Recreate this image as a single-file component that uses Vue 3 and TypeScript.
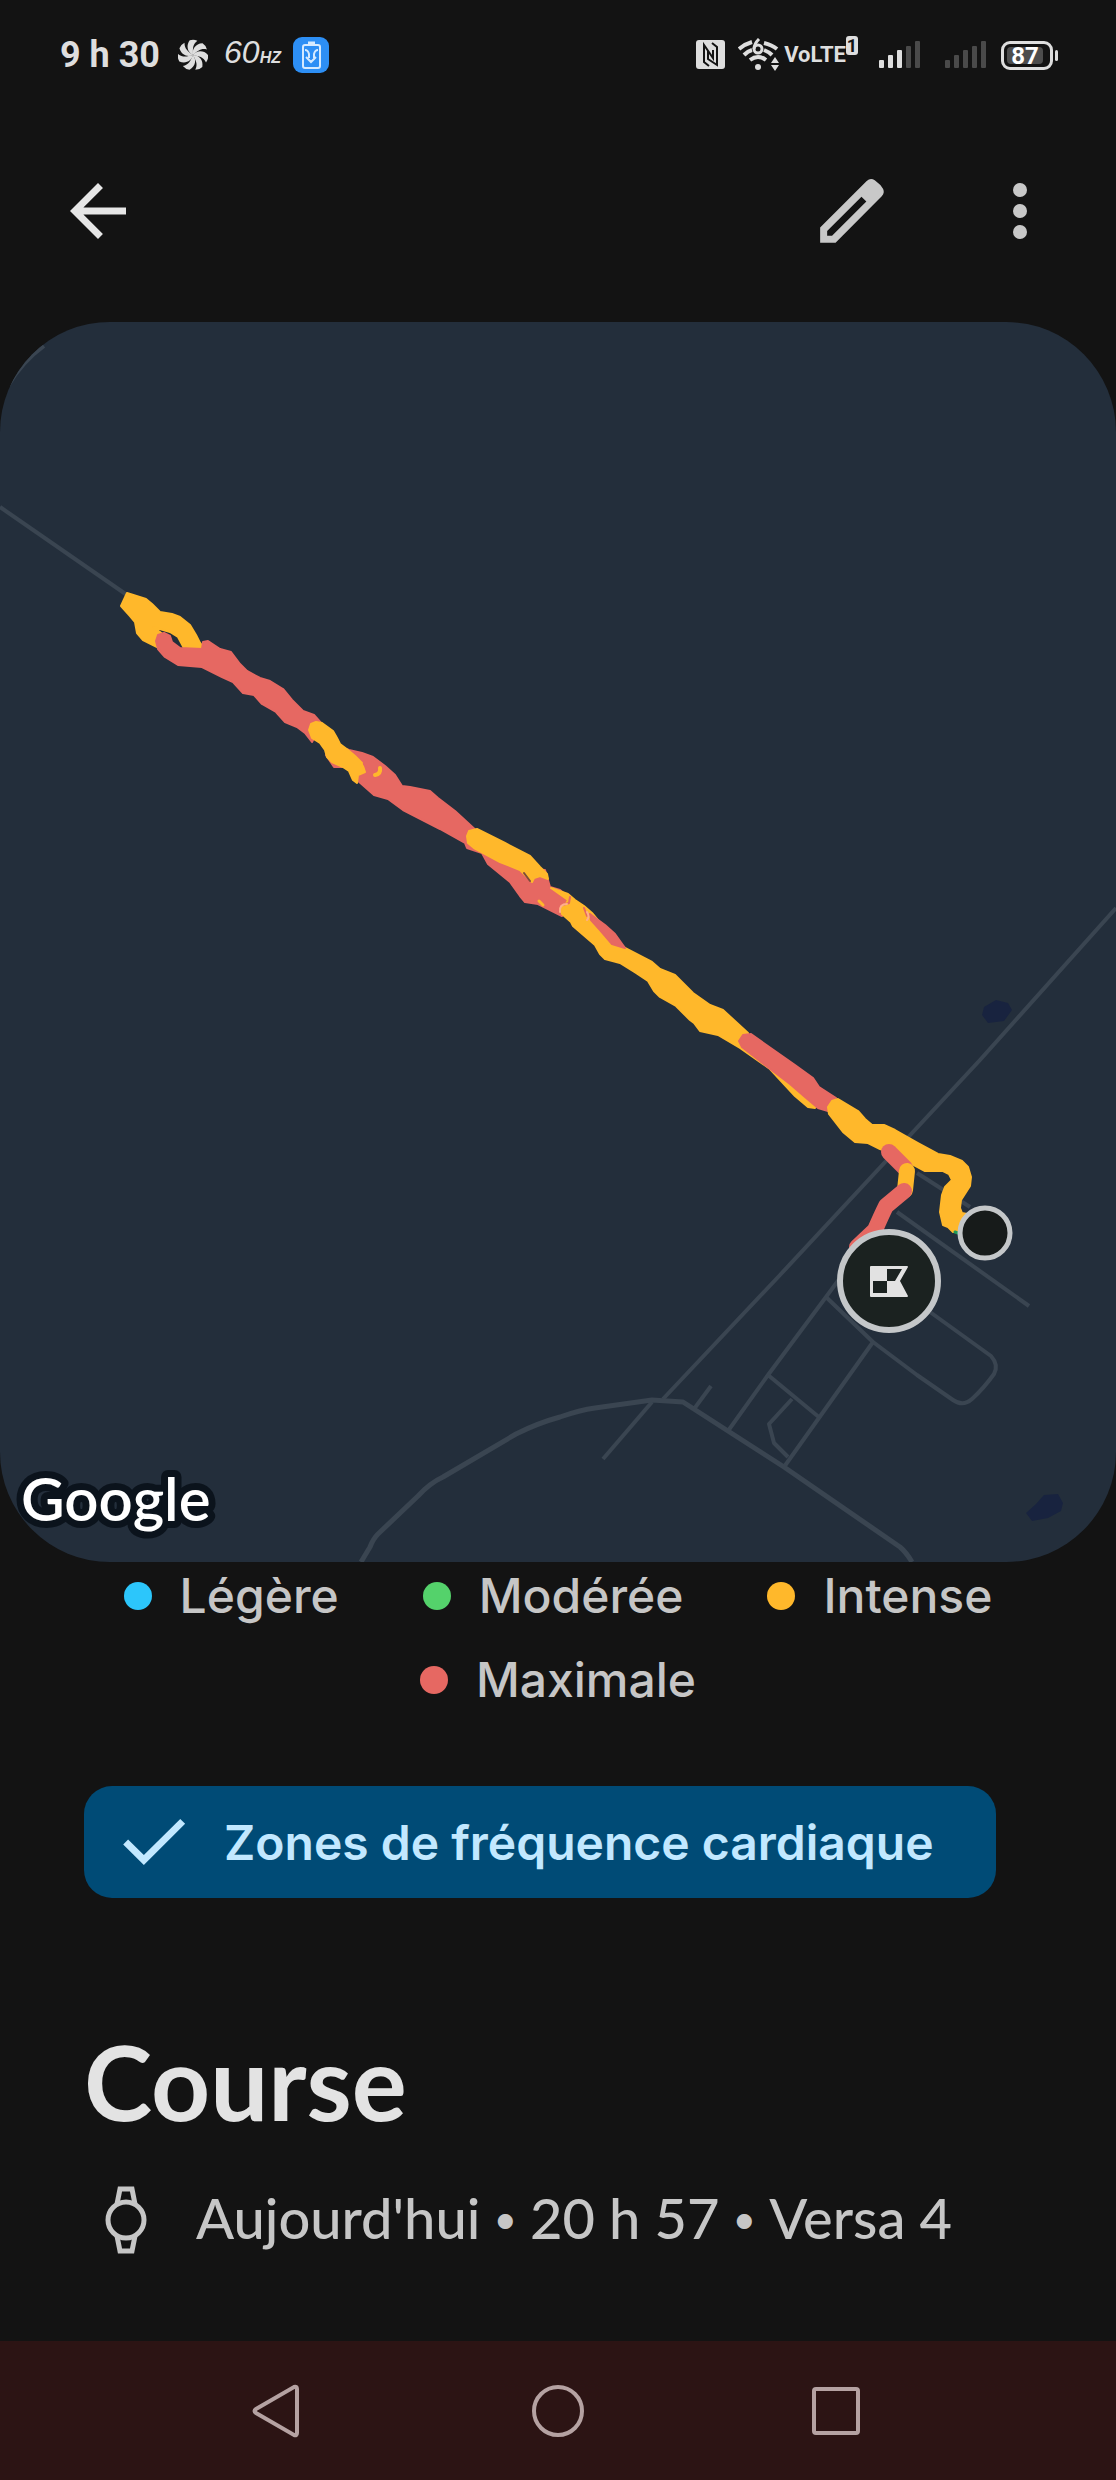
<script setup lang="ts">
interface Zone {
  label: string
  color: string
}

interface Shape {
  color: string
  points: string
}

const amber = '#ffb82b'
const coral = '#e66862'

const zones: Zone[] = [
  { label: 'Légère', color: '#2cc6fb' },
  { label: 'Modérée', color: '#54d26b' },
  { label: 'Intense', color: amber },
  { label: 'Maximale', color: coral },
]

const roads: string[] = [
  'M0 507 L127 595',
  'M8 386 Q22 362 44 346',
  'M1116 908 L980 1060 L780 1275 L663 1399',
  'M652 1402 L603 1459',
  'M694 1409 L711 1386',
  'M728 1431 L768 1375 L826 1297 L840 1278',
  'M826 1297 L873 1342 L917 1375 L953 1400 Q963 1407 972 1399 Q984 1388 994 1374 Q999 1365 991 1356 L930 1312',
  'M873 1342 L784 1467',
  'M768 1375 L820 1418',
  'M792 1399 L769 1424 L774 1443 L788 1457',
  'M897 1212 L1029 1306',
  'M917 1173 L970 1207',
]

const mainRoad =
  'M361 1562 L370 1547 Q373 1539 378 1534 L418 1496 Q430 1483 443 1477 L516 1434 Q538 1423 560 1417 Q580 1410 595 1408 L652 1400 L683 1402 L728 1431 L784 1467 L900 1547 Q906 1552 912 1562'

const track: Shape[] = [
  {
    color: amber,
    points:
      '127,593 146,599 152,604 160,612 172,614 180,617 190,625 196,635 200,643 205,649 202,652 185,650 178,637 170,632 153,627 160,632 165,636 165,646 157,647 143,640 137,633 135,622 130,616 121,606',
  },
  {
    color: coral,
    points:
      '156,641 158,635 164,633 170,636 172,642 180,648 202,649 203,642 208,641 220,649 231,652 240,664 247,671 260,678 270,681 283,689 292,700 303,711 314,715 322,724 312,742 305,733 297,727 285,722 276,712 262,704 254,695 243,693 233,682 222,677 202,667 178,665 165,657 158,649',
  },
  {
    color: coral,
    points:
      '326,755 334,767 342,767 346,766 357,780 374,795 388,799 403,810 440,829 465,843 467,848 482,853 488,864 510,882 520,896 525,902 538,904 546,908 562,916 572,900 560,890 550,887 545,870 520,868 500,858 486,848 480,834 455,811 438,798 430,791 410,787 402,786 395,775 385,766 373,757 362,753 349,750 335,745',
  },
  {
    color: amber,
    points:
      '309,730 311,724 316,722 322,723 333,731 337,738 340,744 348,750 355,756 362,763 365,772 358,775 357,783 353,780 349,771 343,767 332,762 327,757 325,750 320,743 312,738',
  },
  {
    color: amber,
    points:
      '467,836 469,831 477,829 485,833 505,843 530,856 540,867 547,874 548,879 540,876 534,878 532,882 520,870 500,862 474,848 468,843',
  },
  {
    color: amber,
    points:
      '551,888 568,894 575,900 584,906 592,913 606,930 625,948 652,962 660,969 675,975 693,993 710,1005 723,1010 748,1033 750,1050 770,1065 800,1085 818,1104 815,1108 808,1107 795,1096 770,1069 740,1048 718,1035 700,1031 694,1023 690,1020 676,1006 660,997 654,991 648,981 636,973 620,963 605,959 600,954 595,945 573,926 571,922 562,914 561,907 566,904 568,900',
  },
  { color: coral, points: '590,914 605,925 615,934 625,948 612,944 600,930 591,920' },
  {
    color: coral,
    points:
      '739,1041 743,1035 751,1034 765,1044 795,1065 813,1078 819,1087 836,1098 828,1111 818,1108 805,1097 790,1084 765,1065 742,1047',
  },
  {
    color: amber,
    points:
      '828,1107 832,1101 838,1099 858,1111 865,1119 872,1125 884,1125 895,1130 918,1143 938,1154 950,1156 962,1161 968,1167 971,1177 970,1186 961,1200 960,1208 962,1213 967,1214 965,1231 953,1232 948,1227 943,1225 940,1212 942,1195 945,1187 952,1180 949,1174 943,1171 925,1171 912,1164 900,1156 880,1149 868,1143 855,1142 843,1132 829,1114',
  },
]

const bars: number[] = [8, 13, 18, 22, 27]
</script>

<template>
  <div class="screen">
    <div class="status">
      <span class="clock">9 h 30</span>
      <svg class="fan" width="30" height="32" viewBox="-15 -16 30 32" aria-hidden="true">
        <path
          v-for="n in 7"
          :key="n"
          :transform="`rotate(${n * 51.43 - 20})`"
          d="M0 0 C-4 -4 -4 -11 2 -15 Q6 -15 9 -12 C3 -10 2 -6 0 0Z"
          fill="#dedede"
        />
      </svg>
      <span class="rate">60<b>HZ</b></span>
      <svg class="saver" width="36" height="36" viewBox="0 0 36 36" aria-hidden="true">
        <rect width="36" height="36" rx="9" fill="#2d8ff5" />
        <rect x="10" y="8" width="17" height="23" rx="2" fill="none" stroke="#d5eaff" stroke-width="2" />
        <path d="M15 6h7" stroke="#d5eaff" stroke-width="3" />
        <path
          d="M12 13q3 0 4 4v4M25 13q-3 0-4 4v4M13 20l5 5 5-5"
          fill="none"
          stroke="#d5eaff"
          stroke-width="2"
        />
      </svg>
      <span class="grow"></span>
      <svg class="nfc" width="30" height="30" viewBox="0 0 30 30" aria-hidden="true">
        <rect width="29" height="29" rx="3" fill="#dedede" />
        <path
          d="M13 26 L8 22 V5 L17 18 V10 M12 11 V19 L21 25 V7 L16 3"
          fill="none"
          stroke="#131313"
          stroke-width="2"
        />
      </svg>
      <svg class="wifi" width="42" height="34" viewBox="0 0 42 34" aria-hidden="true">
        <g fill="none" stroke="#dedede" stroke-width="4">
          <path d="M1 11 Q7 6 14 4 M26 5 Q34 7 39 11" />
          <path d="M6 17 Q10 13 14 12 M26 12 Q31 14 34 17" />
          <path d="M12 22 Q20 16 28 22" />
          <path d="M21 1 Q16 6 16 11" stroke-width="3" />
          <circle cx="20" cy="11" r="4" stroke-width="3" />
        </g>
        <circle cx="20" cy="29" r="3" fill="#dedede" />
        <path d="M33 25 l4-6 4 6z M33 27 l4 6 4-6z" fill="#dedede" />
      </svg>
      <span class="volte">VoLTE</span>
      <span class="sim">1</span>
      <svg class="signal" width="42" height="28" viewBox="0 0 42 28" aria-hidden="true">
        <rect
          v-for="(h, i) in bars"
          :key="i"
          :x="i * 9"
          :y="27 - h"
          width="5"
          :height="h"
          rx="1"
          :fill="i < 3 ? '#dedede' : '#4a4a4a'"
        />
      </svg>
      <svg class="signal second" width="42" height="28" viewBox="0 0 42 28" aria-hidden="true">
        <rect
          v-for="(h, i) in bars"
          :key="i"
          :x="i * 9"
          :y="27 - h"
          width="5"
          :height="h"
          rx="1"
          fill="#4a4a4a"
        />
      </svg>
      <span class="battery"><span class="level">87</span></span>
    </div>

    <header class="toolbar">
      <button type="button" aria-label="Retour">
        <svg viewBox="0 0 24 24" aria-hidden="true">
          <path
            fill="#e6e6e6"
            d="M20 11H7.83l5.59-5.59L12 4l-8 8 8 8 1.41-1.41L7.83 13H20v-2z"
          />
        </svg>
      </button>
      <span class="grow"></span>
      <button type="button" aria-label="Modifier">
        <svg viewBox="0 0 24 24" aria-hidden="true">
          <path
            fill="#c8c8c8"
            fill-rule="evenodd"
            d="M2.9 21.1V16.7L16.2 3.4Q17.3 2.4 18.5 3.2Q20.2 4.4 20.9 5.7Q21.4 6.8 20.5 7.8L7.3 21.1ZM4.9 19.1H6.3L16.1 9.3L14.7 7.9L4.9 17.7Z"
          />
        </svg>
      </button>
      <button type="button" aria-label="Plus d'options">
        <svg viewBox="0 0 24 24" aria-hidden="true">
          <g fill="#c8c8c8">
            <circle cx="12" cy="6" r="2" />
            <circle cx="12" cy="12" r="2" />
            <circle cx="12" cy="18" r="2" />
          </g>
        </svg>
      </button>
    </header>

    <main>
      <svg class="map" viewBox="0 322 1116 1240" role="img" aria-label="Carte du parcours">
        <rect y="322" width="1116" height="1240" fill="#232e3b" />
        <g fill="#18233f">
          <path d="M984 1007 L996 1000 L1008 1003 L1012 1010 L1004 1021 L988 1023 L982 1015Z" />
          <path
            d="M1026 1513 L1036 1504 L1044 1495 L1058 1494 L1063 1503 L1061 1511 L1048 1518 L1032 1521Z"
          />
        </g>
        <g fill="none" stroke="#3a4551" stroke-linejoin="round">
          <path v-for="d in roads" :key="d" :d="d" stroke-width="4" />
          <path :d="mainRoad" stroke-width="5" />
        </g>
        <polygon
          v-for="(s, i) in track"
          :key="i"
          :points="s.points"
          :fill="s.color"
          :stroke="s.color"
          stroke-width="2"
          stroke-linejoin="round"
        />
        <g fill="none" stroke-linecap="round" stroke-linejoin="round">
          <path d="M380 768 Q381 774 375 775" :stroke="amber" stroke-width="4" />
          <path d="M367 763 L373 766" :stroke="coral" stroke-width="8" />
          <path d="M539 901 L543 905" :stroke="amber" stroke-width="3" />
          <path d="M524 873 L530 881" stroke="#7c4a3c" stroke-width="2" />
          <path d="M570 897 L569 903 L563 905 M584 908 L587 916" :stroke="coral" stroke-width="2" />
          <path d="M560 912 Q559 904 567 904 M587 912 Q590 917 587 920" stroke="#ffb08a" stroke-width="2" />
          <path d="M955 1232 L958 1233" stroke="#1f9a58" stroke-width="3" />
          <g stroke-width="16">
            <path d="M889 1152 L905 1168" :stroke="coral" />
            <path d="M907 1171 L905 1190" :stroke="amber" />
            <path d="M904 1191 L886 1206 Q882 1214 875 1230 L857 1247" :stroke="coral" />
          </g>
        </g>
        <circle cx="985" cy="1233" r="25" fill="#171b1a" stroke="#c4c7c9" stroke-width="5" />
        <circle cx="889" cy="1281" r="49" fill="#1b2220" stroke="#c4c7c9" stroke-width="6" />
        <path
          fill="#e2e2e2"
          fill-rule="evenodd"
          d="M871 1266 H907 Q908 1266 908 1267 L900 1281 L908 1296 Q908 1297 907 1297 H871 Q870 1297 870 1296 V1267 Q870 1266 871 1266Z M887 1269 V1281 H895 L902 1269Z M873 1281 V1293 H887 V1281Z"
        />
        <text x="21" y="1521" class="brand">Google</text>
      </svg>

      <ul class="legend">
        <li v-for="z in zones" :key="z.label">
          <span class="dot" :style="{ background: z.color }"></span>{{ z.label }}
        </li>
      </ul>

      <button type="button" class="chip" aria-pressed="true">
        <svg width="84" height="84" viewBox="0 0 24 24" aria-hidden="true">
          <path
            fill="#c2e8ff"
            d="M9.1 18.6 L3.2 12.7 L4.6 11.3 L9.1 15.7 L19.5 5.4 L20.9 6.8Z"
          />
        </svg>
        <span>Zones de fréquence cardiaque</span>
      </button>

      <section class="details">
        <h1>Course</h1>
        <p>
          <svg width="44" height="70" viewBox="0 0 44 70" aria-hidden="true">
            <g fill="none" stroke="#c6c6c6" stroke-width="5">
              <circle cx="22" cy="35" r="18" />
              <path d="M13 19 L16 4 H28 L31 19 M13 51 L16 66 H28 L31 51" />
            </g>
          </svg>
          <span class="summary">
            <span>Aujourd'hui</span>
            <span class="bullet">•</span>
            <span>20 h 57</span>
            <span class="bullet">•</span>
            <span>Versa 4</span>
          </span>
        </p>
      </section>
    </main>

    <nav class="system">
      <button type="button" aria-label="Précédent">
        <svg width="60" height="60" viewBox="0 0 60 60" aria-hidden="true">
          <path d="M6 28 L44 6 Q47 5 47 8 V52 Q47 55 44 54 L6 32 Q3 30 6 28Z" />
        </svg>
      </button>
      <button type="button" aria-label="Accueil">
        <svg width="60" height="60" viewBox="0 0 60 60" aria-hidden="true">
          <circle cx="30" cy="30" r="24" />
        </svg>
      </button>
      <button type="button" aria-label="Applications récentes">
        <svg width="60" height="60" viewBox="0 0 60 60" aria-hidden="true">
          <rect x="8" y="8" width="44" height="44" rx="2" />
        </svg>
      </button>
    </nav>
  </div>
</template>

<style>
body {
  background: #131313;
}
</style>

<style scoped>
.screen {
  min-height: 100vh;
  display: flex;
  flex-direction: column;
  background: #131313;
  color: #c6c6c6;
  font-family: Inter, 'Open Sans', sans-serif;
}

svg {
  display: block;
  flex: none;
}

button {
  border: 0;
  padding: 0;
  background: none;
  color: inherit;
  font: inherit;
}

.grow {
  flex: 1;
}

.status {
  display: flex;
  align-items: center;
  height: 90px;
  padding: 10px 56px 0 60px;
  color: #dedede;
  white-space: nowrap;
}

.clock {
  font: 700 36px/44px Roboto, sans-serif;
}

.fan {
  margin-left: 18px;
}

.rate {
  margin-left: 16px;
  font: italic 400 32px/44px 'Liberation Sans', sans-serif;
}

.rate b {
  font-size: 16px;
}

.saver {
  margin-left: 12px;
}

.wifi {
  margin-left: 12px;
}

.volte {
  margin-left: 4px;
  font: 700 22px/30px Roboto, sans-serif;
}

.sim {
  align-self: flex-start;
  width: 12px;
  margin-top: 26px;
  border-radius: 3px;
  background: #dedede;
  color: #131313;
  font: 700 18px/19px Roboto, sans-serif;
  text-align: center;
}

.signal {
  margin-left: 21px;
}

.signal.second {
  margin-left: 24px;
}

.battery {
  position: relative;
  box-sizing: border-box;
  width: 52px;
  height: 29px;
  margin: 0 7px 0 14px;
  padding: 3px;
  border: 3px solid #dedede;
  border-radius: 9px;
}

.battery::after {
  content: '';
  position: absolute;
  right: -8px;
  top: 6px;
  width: 3px;
  height: 11px;
  border-radius: 2px;
  background: #dedede;
}

.level {
  display: block;
  width: 36px;
  height: 17px;
  border-radius: 4px;
  background: #4d4d4d;
  color: #ffffff;
  font: 700 24px/18px Roboto, sans-serif;
  text-align: center;
}

.toolbar {
  display: flex;
  align-items: center;
  gap: 84px;
  height: 222px;
  padding: 0 54px 0 56px;
}

.toolbar svg {
  width: 84px;
  height: 84px;
}

.map {
  width: 100%;
  height: auto;
  border-radius: 110px;
}

.brand {
  font: 600 60px Lato, sans-serif;
  fill: #ffffff;
  stroke: #0b131c;
  stroke-width: 14px;
  stroke-linejoin: round;
  paint-order: stroke;
}

.legend {
  display: flex;
  flex-wrap: wrap;
  justify-content: center;
  gap: 16px 84px;
  margin: 0;
  padding: 0 60px;
  list-style: none;
  font-size: 48px;
  font-weight: 500;
  line-height: 68px;
}

.legend li {
  display: flex;
  align-items: center;
  gap: 28px;
}

.dot {
  width: 28px;
  height: 28px;
  border-radius: 50%;
}

.chip {
  display: flex;
  align-items: center;
  gap: 28px;
  height: 112px;
  margin: 72px 84px 0;
  padding: 0 62px 0 28px;
  border-radius: 28px;
  background: #004b76;
  color: #c2e8ff;
  font-size: 48px;
  font-weight: 600;
  white-space: nowrap;
}

.details {
  padding: 123px 84px 0;
  font-family: Lato, 'Open Sans', sans-serif;
}

h1 {
  margin: 0;
  color: #e3e3e3;
  font-size: 103px;
  font-weight: 700;
  line-height: 120px;
}

p {
  display: flex;
  align-items: center;
  gap: 48px;
  margin: 39px 0 0;
  padding-left: 20px;
  font-size: 56px;
  font-weight: 500;
  line-height: 76px;
  white-space: nowrap;
}

.summary {
  display: flex;
  align-items: center;
  gap: 12px;
  padding-bottom: 4px;
}

.bullet {
  font-family: Inter, sans-serif;
  font-size: 48px;
}

.system {
  display: flex;
  justify-content: center;
  align-items: center;
  gap: 218px;
  height: 139px;
  margin-top: auto;
  background: #2c1414;
}

.system svg {
  fill: none;
  stroke: #b5a2a2;
  stroke-width: 4px;
}
</style>
